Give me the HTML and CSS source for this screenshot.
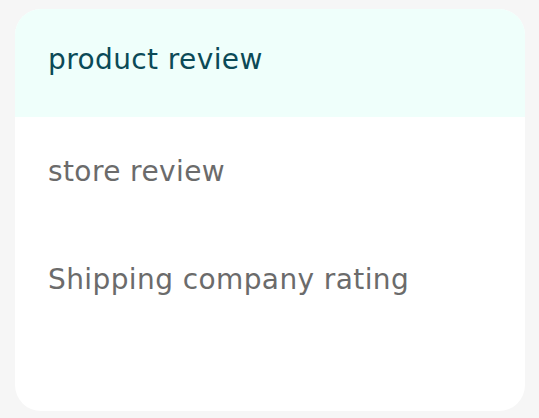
FILE: index.html
```html
<!DOCTYPE html>
<html lang="en">
<head>
<meta charset="utf-8">
<link rel="stylesheet" href="styles.css">
</head>
<body>
<div class="card">
  <div class="tab active">product review</div>
  <div class="tab">store review</div>
  <div class="tab">Shipping company rating</div>
</div>
</body>
</html>
```
FILE: styles.css
```css
html, body {
  margin: 0;
  padding: 0;
  background: #f6f6f6;
}
body {
  padding: 9px 14px 7px 15px;
  font-family: "DejaVu Sans", "Liberation Sans", sans-serif;
}
.card {
  background: #ffffff;
  border-radius: 26px;
  overflow: hidden;
  height: 402px;
  display: flex;
  flex-direction: column;
}
.tab {
  height: 108px;
  display: flex;
  align-items: center;
  padding-left: 33px;
  font-size: 28px;
  letter-spacing: 0.4px;
  color: #6b6b6b;
  flex: none;
}
.tab.active {
  background: #effffb;
  color: #0b4a57;
  padding-bottom: 7px;
  box-sizing: border-box;
}
```
